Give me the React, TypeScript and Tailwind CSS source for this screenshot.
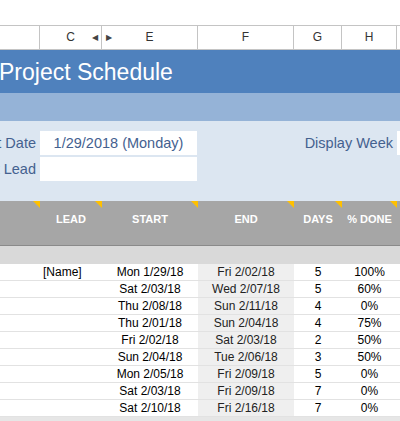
import React from 'react';

const rows = [
  { lead: '[Name]', start: 'Mon 1/29/18', end: 'Fri 2/02/18', days: 5, done: '100%' },
  { lead: '', start: 'Sat 2/03/18', end: 'Wed 2/07/18', days: 5, done: '60%' },
  { lead: '', start: 'Thu 2/08/18', end: 'Sun 2/11/18', days: 4, done: '0%' },
  { lead: '', start: 'Thu 2/01/18', end: 'Sun 2/04/18', days: 4, done: '75%' },
  { lead: '', start: 'Fri 2/02/18', end: 'Sat 2/03/18', days: 2, done: '50%' },
  { lead: '', start: 'Sun 2/04/18', end: 'Tue 2/06/18', days: 3, done: '50%' },
  { lead: '', start: 'Mon 2/05/18', end: 'Fri 2/09/18', days: 5, done: '0%' },
  { lead: '', start: 'Sat 2/03/18', end: 'Fri 2/09/18', days: 7, done: '0%' },
  { lead: '', start: 'Sat 2/10/18', end: 'Fri 2/16/18', days: 7, done: '0%' }
];

const grid = 'grid grid-cols-[40px_62px_96px_96px_48px_55px_1fr]';

function Flag() {
  return (
    <svg className="absolute right-0 top-0" width="7" height="7" viewBox="0 0 7 7">
      <polygon points="0,0 7,0 7,7" fill="#ffc000" />
    </svg>
  );
}

function HeadCell({ label }: { label: string }) {
  return (
    <div className="relative pt-[12px] text-center text-[11px] font-bold leading-[13px] text-white">
      {label}
      <Flag />
    </div>
  );
}

export default function App() {
  return (
    <div className="h-[421px] w-[400px] overflow-hidden bg-white font-['Liberation_Sans',Arial,sans-serif]">
      <div className="h-[25px]" />

      {/* column letters */}
      <div className={`${grid} h-[25px] border-y border-[#c4c4c4] text-[12px] leading-[23px] text-[#333]`}>
        <div className="border-r border-[#c4c4c4]" />
        <div className="relative border-r border-[#c4c4c4] text-center">
          C
          <span className="absolute right-[3px] top-0 text-[8px] text-[#444]">◀</span>
        </div>
        <div className="relative border-r border-[#c4c4c4] text-center">
          E
          <span className="absolute left-[4px] top-0 text-[8px] text-[#444]">▶</span>
        </div>
        <div className="border-r border-[#c4c4c4] text-center">F</div>
        <div className="border-r border-[#c4c4c4] text-center">G</div>
        <div className="border-r border-[#c4c4c4] text-center">H</div>
        <div />
      </div>

      {/* title */}
      <div className="flex h-[43px] items-center bg-[#4f81bd] pt-[2px] text-[23px] leading-none text-white">
        <span className="-ml-[1px]">Project Schedule</span>
      </div>
      <div className="h-[28px] bg-[#95b3d7]" />

      {/* inputs */}
      <div className={`${grid} gap-y-[2px] bg-[#dce6f1] pb-[20px] pt-[10px] text-[14.5px] leading-[24px] text-[#44618f]`}>
        <div className="flex justify-end whitespace-nowrap pr-[4px]">Start Date</div>
        <div className="col-span-2 mr-[1px] h-[24px] bg-white text-center">1/29/2018 (Monday)</div>
        <div className="col-span-3 whitespace-nowrap pr-[4px] text-right">Display Week</div>
        <div className="h-[24px] bg-white" />

        <div className="flex justify-end whitespace-nowrap pr-[4px]">Project Lead</div>
        <div className="col-span-2 mr-[1px] h-[24px] bg-white" />
        <div className="col-span-4" />
      </div>

      {/* table header */}
      <div className={`${grid} h-[45px] border-b border-[#8a8a8a] bg-[#a6a6a6]`}>
        <HeadCell label="" />
        <HeadCell label="LEAD" />
        <HeadCell label="START" />
        <HeadCell label="END" />
        <HeadCell label="DAYS" />
        <HeadCell label="% DONE" />
        <div />
      </div>
      <div className="h-[18px] bg-[#d9d9d9]" />

      {/* rows */}
      {rows.map((r, i) => (
        <div key={i} className={`${grid} h-[17px] border-b border-[#e2e2e2] text-[12px] leading-[16px] text-black`}>
          <div />
          <div className="pl-[3px]">{r.lead}</div>
          <div className="text-center">{r.start}</div>
          <div className="bg-[#efefef] text-center text-[#222]">{r.end}</div>
          <div className="text-center">{r.days}</div>
          <div className="text-center">{r.done}</div>
          <div />
        </div>
      ))}
      <div className="h-[6px] bg-[#e6e6e6]" />
    </div>
  );
}
